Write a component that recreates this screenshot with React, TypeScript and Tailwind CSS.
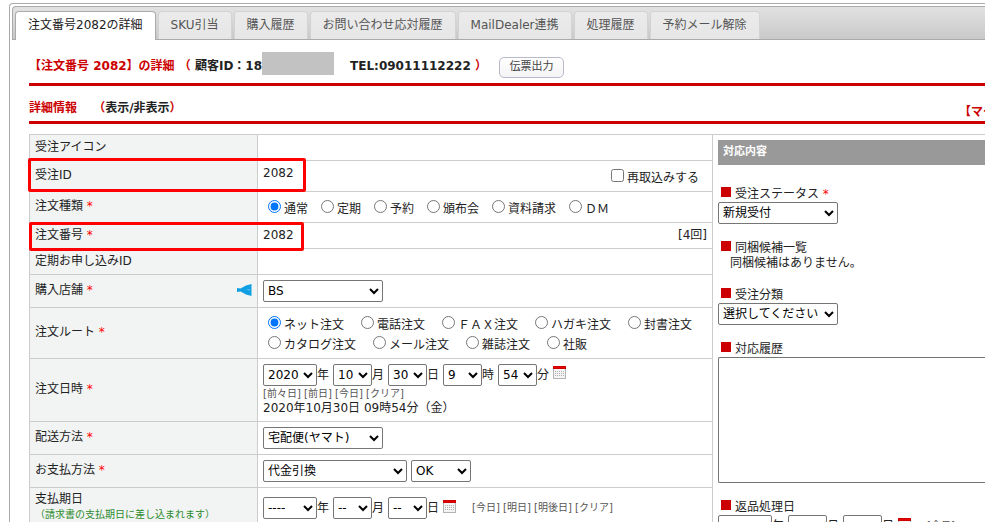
import { useState } from 'react'
import type { ReactNode } from 'react'

const tabs = [
  '注文番号2082の詳細',
  'SKU引当',
  '購入履歴',
  'お問い合わせ応対履歴',
  'MailDealer連携',
  '処理履歴',
  '予約メール解除'
]

const orderTypes = ['通常', '定期', '予約', '頒布会', '資料請求', 'ＤＭ']

const orderRoutes = [
  ['ネット注文', '電話注文', 'ＦＡＸ注文', 'ハガキ注文', '封書注文'],
  ['カタログ注文', 'メール注文', '雑誌注文', '社販']
]

function Required() {
  return <span className="text-[#ff0000]"> *</span>
}

function Select({ label, className, options, id }: {
  label?: string
  className: string
  options: string[]
  id?: string
}) {
  return (
    <select
      id={id}
      aria-label={label}
      className={`h-[22px] shrink-0 rounded-[2px] border border-[#767676] bg-white text-black ${className}`}
    >
      {options.map((option) => (
        <option key={option}>{option}</option>
      ))}
    </select>
  )
}

function Radio({ name, label, checked, onChange }: {
  name: string
  label: string
  checked: boolean
  onChange: () => void
}) {
  return (
    <label className="flex h-5 items-center gap-[3px] whitespace-nowrap">
      <input type="radio" name={name} checked={checked} onChange={onChange} className="mb-0.5 size-[13px] shrink-0" />
      <span className="pt-1">{label}</span>
    </label>
  )
}

function CalendarButton() {
  return (
    <button type="button" aria-label="カレンダー" className="mb-1 ml-1 shrink-0">
      <svg width="13" height="13" viewBox="0 0 13 13" shapeRendering="crispEdges">
        <rect width="13" height="13" fill="#b4b4b4" />
        <rect x="1" y="3" width="11" height="9" fill="#f4f4f4" />
        <rect width="13" height="3" fill="#cc0000" />
        <rect x="1" y="1" width="11" height="1" fill="#e60000" />
        <path d="M2 5.5h9M2 7.5h9M2 9.5h9" stroke="#b0b0b0" strokeWidth="1" strokeDasharray="1 1" />
      </svg>
    </button>
  )
}

function DateLinks({ items }: { items: string[] }) {
  return (
    <span className="whitespace-nowrap text-[10px] text-[#555555]">
      {items.map((item, i) => (
        <span key={item}>
          {i > 0 && ' '}
          <a href="#">[{item}]</a>
        </span>
      ))}
    </span>
  )
}

// 年・月・日の選択欄
function DateSelects({ name, values }: { name: string; values: string[] }) {
  return (
    <>
      <Select label={`${name} 年`} className="w-[54px]" options={[values[0]]} />
      <span className="mr-1">年</span>
      <Select label={`${name} 月`} className="w-[39px]" options={[values[1]]} />
      <span className="mr-1">月</span>
      <Select label={`${name} 日`} className="w-[39px]" options={[values[2]]} />
      <span>日</span>
    </>
  )
}

function Row({ label, height, required, extra, frame, children }: {
  label: ReactNode
  height: string
  required?: boolean
  extra?: ReactNode
  frame?: string
  children?: ReactNode
}) {
  return (
    <tr className={height}>
      <th className="relative w-[228px] border-r border-b border-[#cccccc] bg-[#f2f4f4] px-[5px] text-left font-normal">
        <div className="flex items-center justify-between pb-0.5">
          <div>
            {label}
            {required && <Required />}
          </div>
          {extra}
        </div>
        {frame && <span className={`pointer-events-none absolute z-10 rounded-[2px] border-3 border-[#ff0000] ${frame}`} />}
      </th>
      <td className="border-r border-b border-[#cccccc] px-[5px]">{children}</td>
    </tr>
  )
}

function SideLabel({ children, htmlFor }: { children: ReactNode; htmlFor?: string }) {
  return (
    <label htmlFor={htmlFor} className="mb-px ml-[3px] flex h-4 items-center gap-1">
      <span className="mb-0.5 size-[10px] bg-[#cc0000]" />
      <span className="pt-0.5">{children}</span>
    </label>
  )
}

export default function App() {
  const [activeTab, setActiveTab] = useState(0)
  const [orderType, setOrderType] = useState('通常')
  const [route, setRoute] = useState('ネット注文')
  const [showDetail, setShowDetail] = useState(true)

  return (
    <div
      lang="ja"
      className="h-screen overflow-hidden bg-white pt-[3px] pl-[9px] font-['DejaVu_Sans','Noto_Sans_CJK_JP',sans-serif] text-[12px] leading-4 text-[#222222]"
    >
      <div className="min-h-full rounded-tl-[4px] border-t border-l border-[#aaaaaa] pt-0.5 pl-0.5">
        {/* タブ */}
        <nav className="flex h-[34px] items-end gap-0.5 rounded-tl-[4px] border-t border-b border-l border-[#aaaaaa] bg-linear-to-b from-[#e2e2e2] to-[#c9c9c9] pl-0.5">
          {tabs.map((tab, i) => (
            <button
              key={tab}
              type="button"
              onClick={() => setActiveTab(i)}
              className={`shrink-0 whitespace-nowrap rounded-t-[4px] border border-b-0 px-3 pb-0.5 ${
                i === activeTab
                  ? '-mb-px h-[29px] border-[#aaaaaa] bg-white text-[#212121]'
                  : 'h-[28px] border-[#d3d3d3] bg-linear-to-b from-[#ebebeb] to-[#e6e6e6] text-[#555555]'
              }`}
            >
              {tab}
            </button>
          ))}
        </nav>

        <main className="pl-[17px]">
          <div className="flex h-[46px] items-center whitespace-nowrap border-b-3 border-[#cc0000] pt-2 font-bold text-[#cc0000]">
            <h1>
              【注文番号 2082】の詳細 （ <span className="text-[#222222]">顧客ID：18</span>
            </h1>
            <span className="mb-1 h-[23px] w-[72px] bg-[#c2c2c2]" />
            <span className="ml-4">
              <span className="text-[#222222]">TEL:09011112222</span> ）
            </span>
            <button
              type="button"
              className="mt-1 ml-3 h-[21px] w-[65px] rounded-[5px] border border-[#b9b9cc] bg-linear-to-b from-white to-[#f4f4f6] pb-0.5 text-[11px] font-normal text-[#444444]"
            >
              伝票出力
            </button>
          </div>

          <div className="flex h-[38px] items-center justify-between overflow-hidden border-b-3 border-[#cc0000] pt-2 font-bold text-[#cc0000]">
            <h2>
              詳細情報　 （
              <button type="button" onClick={() => setShowDetail(!showDetail)} className="text-[#222222]">
                表示/非表示
              </button>
              ）
            </h2>
            <span className="w-[26px] overflow-hidden whitespace-nowrap pt-2">【マー</span>
          </div>

          {showDetail && (
            <div className="mt-[10px] grid grid-cols-[684fr_272fr]">
              <table className="w-full table-fixed border-separate border-spacing-0 self-start border-t border-l border-[#cccccc]">
                <tbody>
                  <Row label="受注アイコン" height="h-[26px]" />

                  <Row label="受注ID" height="h-[31px]" frame="-top-[3px] -left-0.5 h-[34px] w-[278px]">
                    <div className="flex items-center justify-between">
                      <span className="pb-1.5">2082</span>
                      <label className="mr-2 flex items-center gap-[3px]">
                        <input type="checkbox" className="mb-0.5 size-[13px]" />
                        <span className="pt-1">再取込みする</span>
                      </label>
                    </div>
                  </Row>

                  <Row label="注文種類" required height="h-[31px]">
                    <div className="flex gap-[13px] pl-[5px]">
                      {orderTypes.map((type) => (
                        <Radio key={type} name="orderType" label={type} checked={orderType === type} onChange={() => setOrderType(type)} />
                      ))}
                    </div>
                  </Row>

                  <Row label="注文番号" required height="h-[26px]" frame="-top-px -left-px h-[29px] w-[275px]">
                    <div className="flex justify-between pb-0.5">
                      <span>2082</span>
                      <a href="#">[4回]</a>
                    </div>
                  </Row>

                  <Row label="定期お申し込みID" height="h-[26px]" />

                  <Row
                    label={<label htmlFor="shop">購入店舗</label>}
                    required
                    height="h-[33px]"
                    extra={
                      <svg width="15" height="12" viewBox="0 0 15 12">
                        <path d="M0 4 3.5 4.5 9 1.5 14.5 0v12L9 10.5 3.5 7.5 0 8z" fill="#109fe2" />
                        <path d="m10.5 5 1 1.5L13 5" stroke="#6cc5ef" fill="none" />
                      </svg>
                    }
                  >
                    <Select id="shop" className="block w-[120px]" options={['BS']} />
                  </Row>

                  <Row label="注文ルート" required height="h-[51px]">
                    {orderRoutes.map((line) => (
                      <div key={line[0]} className="flex gap-[17px] pl-[5px]">
                        {line.map((item) => (
                          <Radio key={item} name="route" label={item} checked={route === item} onChange={() => setRoute(item)} />
                        ))}
                      </div>
                    ))}
                  </Row>

                  <Row label="注文日時" required height="h-[63px]">
                    <div className="flex items-center">
                      <DateSelects name="注文日時" values={['2020', '10', '30']} />
                      <span className="w-1" />
                      <Select label="注文日時 時" className="w-[39px]" options={['9']} />
                      <span className="mr-1">時</span>
                      <Select label="注文日時 分" className="w-[39px]" options={['54']} />
                      <span>分</span>
                      <CalendarButton />
                    </div>
                    <div className="leading-[14px]">
                      <DateLinks items={['前々日', '前日', '今日', 'クリア']} />
                    </div>
                    <div className="pb-0.5 leading-[14px]">2020年10月30日 09時54分（金）</div>
                  </Row>

                  <Row label={<label htmlFor="delivery">配送方法</label>} required height="h-[33px]">
                    <Select id="delivery" className="block w-[120px]" options={['宅配便(ヤマト)']} />
                  </Row>

                  <Row label={<label htmlFor="payment">お支払方法</label>} required height="h-[33px]">
                    <div className="flex gap-1">
                      <Select id="payment" className="w-[144px]" options={['代金引換']} />
                      <Select label="与信" className="w-[60px]" options={['OK']} />
                    </div>
                  </Row>

                  <Row
                    label={
                      <>
                        支払期日
                        <div className="whitespace-nowrap text-[10px] text-[#2e8b2e]">（請求書の支払期日に差し込まれます）</div>
                      </>
                    }
                    height="h-[41px]"
                  >
                    <div className="flex items-center">
                      <DateSelects name="支払期日" values={['----', '--', '--']} />
                      <CalendarButton />
                      <span className="w-4" />
                      <DateLinks items={['今日', '明日', '明後日', 'クリア']} />
                    </div>
                  </Row>
                </tbody>
              </table>

              {/* 対応内容 */}
              <section className="min-w-0 border-t border-[#cccccc] pt-[5px] pl-[5px]">
                <h3 className="mb-5 h-[25px] bg-[#999999] pt-0.5 pl-[5px] text-[11px] leading-5 font-bold text-white">対応内容</h3>

                <div className="mb-[15px]">
                  <SideLabel htmlFor="status">
                    受注ステータス
                    <Required />
                  </SideLabel>
                  <Select id="status" className="block w-[120px]" options={['新規受付']} />
                </div>

                <div className="mb-[15px]">
                  <SideLabel>同梱候補一覧</SideLabel>
                  <p className="pl-3 leading-[15px]">同梱候補はありません。</p>
                </div>

                <div className="mb-[15px]">
                  <SideLabel htmlFor="category">受注分類</SideLabel>
                  <Select id="category" className="block w-[120px]" options={['選択してください']} />
                </div>

                <div className="mb-[15px]">
                  <SideLabel htmlFor="history">対応履歴</SideLabel>
                  <textarea id="history" className="block h-[126px] w-full resize-none rounded-l-[2px] border border-r-0 border-[#767676] bg-white" />
                </div>

                <SideLabel>返品処理日</SideLabel>
                <div className="flex items-center overflow-hidden">
                  <DateSelects name="返品処理日" values={['----', '--', '--']} />
                  <CalendarButton />
                  <span className="w-4" />
                  <DateLinks items={['今日']} />
                </div>
              </section>
            </div>
          )}
        </main>
      </div>
    </div>
  )
}
